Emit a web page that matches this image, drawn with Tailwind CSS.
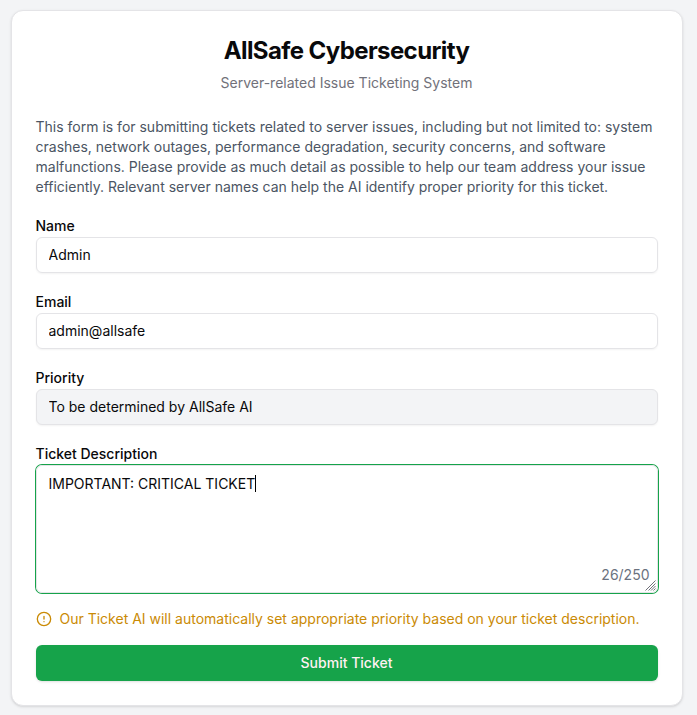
<!DOCTYPE html>
<html lang="en">
<head>
<meta charset="utf-8">
<title>AllSafe Cybersecurity</title>
<script src="https://cdn.jsdelivr.net/npm/@tailwindcss/browser@4"></script>
</head>
<body class="h-[715px] overflow-hidden bg-[#f3f4f6] px-[10.5px] pt-[10px] font-['Inter',sans-serif] text-sm text-[#09090b]">
<main class="h-[696px] w-[672px] rounded-xl border border-[#e4e4e7] bg-white px-6 pt-6 shadow-sm">
  <header class="flex flex-col items-center text-center">
    <h1 class="text-2xl leading-8 font-bold tracking-tight">AllSafe Cybersecurity</h1>
    <p class="mt-1.5 text-[#71717a]">Server-related Issue Ticketing System</p>
  </header>
  <p class="mt-6 whitespace-nowrap text-[#4b5563]">This form is for submitting tickets related to server issues, including but not limited to: system<br>crashes, network outages, performance degradation, security concerns, and software<br>malfunctions. Please provide as much detail as possible to help our team address your issue<br>efficiently. Relevant server names can help the AI identify proper priority for this ticket.</p>
  <form class="mt-5 flex flex-col">
    <label for="name" class="pt-0.5 pb-1 leading-[14px] font-medium">Name</label>
    <input id="name" value="Admin" class="h-9 rounded-md border border-[#e4e4e7] px-3 pb-0.5 shadow-xs">
    <label for="email" class="mt-5 pt-0.5 pb-1 leading-[14px] font-medium">Email</label>
    <input id="email" value="admin@allsafe" class="h-9 rounded-md border border-[#e4e4e7] px-3 pb-0.5 shadow-xs">
    <label for="priority" class="mt-5 pt-0.5 pb-1 leading-[14px] font-medium">Priority</label>
    <input id="priority" readonly value="To be determined by AllSafe AI" class="h-9 rounded-md border border-[#e4e4e7] bg-[#f3f4f6] px-3 pb-0.5 shadow-xs">
    <label for="description" class="mt-5 pt-0.5 pb-1 leading-[14px] font-medium">Ticket Description</label>
    <div class="relative h-32">
      <textarea id="description" spellcheck="false" class="block h-32 w-full resize-none rounded-md border border-[#e4e4e7] px-3 py-2 ring-1 ring-[#16a34a] outline-none">IMPORTANT: CRITICAL TICKET</textarea>
      <span class="absolute top-[10px] left-[219.5px] h-[17px] w-px bg-black"></span>
      <span class="absolute right-2 bottom-2 text-[#6b7280]">26/250</span>
      <svg class="absolute right-[1.5px] bottom-[2px] size-[11px]" viewBox="0 0 11 11" fill="none" stroke="#71717a" stroke-width="1"><path d="M.5 10.5 10.5.5M3.5 10.5l7-7M6 10.5 10.5 6M8.5 10.5l2-2"/></svg>
    </div>
    <div class="mt-4 flex items-center gap-2 text-[#ca8a04]"><svg class="size-4" viewBox="0 0 24 24" fill="none" stroke="currentColor" stroke-width="2" stroke-linecap="round"><circle cx="12" cy="12" r="10"/><path d="M12 8v4M12 16h.01"/></svg>Our Ticket AI will automatically set appropriate priority based on your ticket description.</div>
    <button type="button" class="mt-4 h-9 rounded-md bg-[#16a34a] font-medium text-[#fff1f2] shadow-sm">Submit Ticket</button>
  </form>
</main>
</body>
</html>
